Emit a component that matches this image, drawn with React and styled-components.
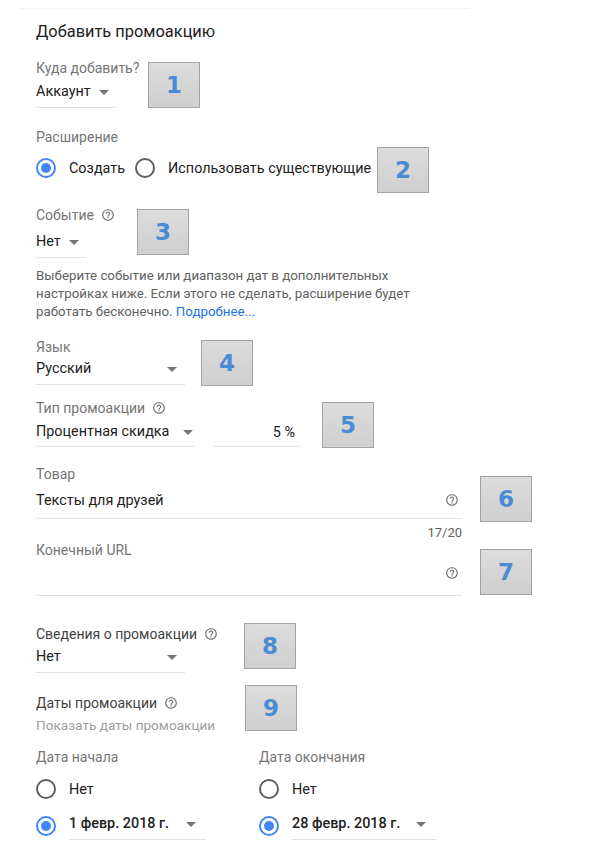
import React from "react";
import styled, { createGlobalStyle } from "styled-components";

const Global = createGlobalStyle`
  html, body { margin: 0; padding: 0; background: #fff; }
  body { font-family: Roboto, "Liberation Sans", Arial, sans-serif; color: #212121; }
  * { box-sizing: border-box; }
`;

const Page = styled.div`
  width: 600px;
  height: 862px;
  overflow: hidden;
  padding-top: 8px;
`;

const TopRule = styled.div`
  margin-left: 20px;
  width: 450px;
  height: 1px;
  background: #f2f2f2;
`;

const Content = styled.div`
  padding-left: 36px;
  display: flex;
  flex-direction: column;
`;

const Title = styled.h1`
  margin: 13px 0 0;
  font-size: 16.4px;
  line-height: 20px;
  font-weight: 400;
  color: #212121;
`;

const Section = styled.div`
  position: relative;
  margin-top: ${(p) => p.$mt}px;
  display: flex;
  flex-direction: column;
`;

const Label = styled.div`
  display: flex;
  align-items: center;
  gap: 7px;
  font-size: 14px;
  line-height: 16px;
  color: ${(p) => (p.$dark ? "#424242" : "#757575")};
  margin-bottom: ${(p) => p.$mb || 0}px;
`;

const Select = styled.div`
  width: ${(p) => p.$w}px;
  height: ${(p) => 24 + (p.$pb ?? 3) + 1}px;
  padding-bottom: ${(p) => p.$pb ?? 3}px;
  padding-right: ${(p) => p.$pr ?? 0}px;
  display: flex;
  align-items: center;
  justify-content: ${(p) => (p.$spread ? "space-between" : "flex-start")};
  gap: 8px;
  border-bottom: 1px solid #e0e0e0;
  font-size: 14.4px;
  line-height: 24px;
  color: #212121;
`;

const Value = styled.span`
  font-weight: ${(p) => (p.$bold ? 500 : 400)};
  white-space: nowrap;
`;

const Arrow = styled.span`
  width: 0;
  height: 0;
  border-left: 5px solid transparent;
  border-right: 5px solid transparent;
  border-top: 5px solid #757575;
  margin-top: 1px;
  flex: none;
`;

const Row = styled.div`
  display: flex;
  align-items: center;
  gap: ${(p) => p.$gap || 0}px;
`;

const RadioRow = styled.div`
  display: flex;
  align-items: center;
  height: 24px;
  gap: 13px;
  font-size: 14.4px;
  color: #212121;
  margin-top: ${(p) => p.$mt || 0}px;
  margin-right: ${(p) => p.$mr || 0}px;
`;

const Radio = styled.span`
  width: 20px;
  height: 20px;
  border-radius: 50%;
  flex: none;
  border: 2px solid ${(p) => (p.$on ? "#4285f4" : "#5f5f5f")};
  display: flex;
  align-items: center;
  justify-content: center;
  &::after {
    content: "";
    width: 10px;
    height: 10px;
    border-radius: 50%;
    background: ${(p) => (p.$on ? "#4285f4" : "transparent")};
  }
`;

const Help = styled.p`
  margin: 9px 0 0;
  font-size: 13.3px;
  line-height: 18px;
  color: #616161;
`;

const Link = styled.a`
  color: #1a73e8;
  text-decoration: none;
`;

const TextInput = styled.div`
  width: ${(p) => p.$w}px;
  height: ${(p) => 24 + p.$pb + 1}px;
  padding-bottom: ${(p) => p.$pb}px;
  padding-right: ${(p) => p.$pr || 0}px;
  display: flex;
  align-items: center;
  justify-content: ${(p) => (p.$right ? "flex-end" : "space-between")};
  border-bottom: 1px solid #e0e0e0;
  font-size: 14.4px;
  color: #212121;
`;

const Counter = styled.div`
  width: 426px;
  margin-top: 6px;
  text-align: right;
  font-size: 13px;
  line-height: 16px;
  color: #616161;
`;

const Sub = styled.div`
  margin-top: 6px;
  font-size: 13.6px;
  line-height: 16px;
  color: #9e9e9e;
`;

const Columns = styled.div`
  display: grid;
  grid-template-columns: 223px 1fr;
`;

const Column = styled.div`
  display: flex;
  flex-direction: column;
`;

const Marker = styled.div`
  position: absolute;
  left: ${(p) => p.$x}px;
  top: ${(p) => p.$y}px;
  width: 52px;
  height: 46px;
  border: 1px solid #a3a3a3;
  background: linear-gradient(180deg, #dcdcdc 0%, #cfcfcf 100%);
  display: flex;
  align-items: center;
  justify-content: center;
  font-family: "DejaVu Sans", Verdana, sans-serif;
  font-weight: 700;
  font-size: 23px;
  color: #4a8bd3;
`;

const HelpIcon = ({ size = 14 }) => (
  <svg width={size} height={size} viewBox="0 0 24 24" fill="#6f6f6f" style={{ flex: "none" }}>
    <path d="M11 18h2v-2h-2v2zm1-16C6.48 2 2 6.48 2 12s4.48 10 10 10 10-4.48 10-10S17.52 2 12 2zm0 18c-4.41 0-8-3.590-8-8s3.59-8 8-8 8 3.59 8 8-3.59 8-8 8zm0-14c-2.21 0-4 1.79-4 4h2c0-1.1.9-2 2-2s2 .9 2 2c0 2-3 1.75-3 5h2c0-2.25 3-2.5 3-5 0-2.21-1.790-4-4-4z" />
  </svg>
);

const DateColumn = ({ label, date, width }) => (
  <Column>
    <Label>{label}</Label>
    <RadioRow $mt={12}>
      <Radio />
      <span>Нет</span>
    </RadioRow>
    <RadioRow $mt={13}>
      <Radio $on />
      <Select $w={width} $pr={10} $spread $pb={3}>
        <Value $bold>{date}</Value>
        <Arrow />
      </Select>
    </RadioRow>
  </Column>
);

export default function App() {
  return (
    <Page>
      <Global />
      <TopRule />
      <Content>
        <Title>Добавить промоакцию</Title>

        <Section $mt={18}>
          <Label $mb={4}>Куда добавить?</Label>
          <Select $w={80} $pb={3}>
            <Value>Аккаунт</Value>
            <Arrow />
          </Select>
          <Marker $x={112} $y={2}>1</Marker>
        </Section>

        <Section $mt={21}>
          <Label $mb={11}>Расширение</Label>
          <Row>
            <RadioRow $mr={10}>
              <Radio $on />
              <span>Создать</span>
            </RadioRow>
            <RadioRow>
              <Radio />
              <span>Использовать существующие</span>
            </RadioRow>
          </Row>
          <Marker $x={341} $y={18}>2</Marker>
        </Section>

        <Section $mt={27}>
          <Label $mb={7}>
            Событие <HelpIcon />
          </Label>
          <Select $w={50} $pb={3}>
            <Value>Нет</Value>
            <Arrow />
          </Select>
          <Marker $x={101} $y={2}>3</Marker>
          <Help>
            Выберите событие или диапазон дат в дополнительных
            <br />
            настройках ниже. Если этого не сделать, расширение будет
            <br />
            работать бесконечно. <Link href="#">Подробнее...</Link>
          </Help>
        </Section>

        <Section $mt={18}>
          <Label $mb={2}>Язык</Label>
          <Select $w={149} $pr={8} $spread $pb={3}>
            <Value>Русский</Value>
            <Arrow />
          </Select>
          <Marker $x={165} $y={1}>4</Marker>
        </Section>

        <Section $mt={15}>
          <Label $mb={4}>
            Тип промоакции <HelpIcon />
          </Label>
          <Row $gap={18}>
            <Select $w={159} $pr={2} $spread $pb={2}>
              <Value>Процентная скидка</Value>
              <Arrow />
            </Select>
            <TextInput $w={87} $pb={2} $pr={5} $right>
              5 %
            </TextInput>
          </Row>
          <Marker $x={286} $y={2}>5</Marker>
        </Section>

        <Section $mt={19}>
          <Label $mb={6}>Товар</Label>
          <TextInput $w={426} $pb={6} $pr={3}>
            <span>Тексты для друзей</span>
            <HelpIcon />
          </TextInput>
          <Counter>17/20</Counter>
          <Marker $x={444} $y={10}>6</Marker>
        </Section>

        <Section $mt={1}>
          <Label $mb={3}>Конечный URL</Label>
          <TextInput $w={426} $pb={10} $pr={3}>
            <span />
            <HelpIcon />
          </TextInput>
          <Marker $x={444} $y={7}>7</Marker>
        </Section>

        <Section $mt={30}>
          <Label $mb={3} $dark>
            Сведения о промоакции <HelpIcon />
          </Label>
          <Select $w={149} $pr={8} $spread $pb={3}>
            <Value>Нет</Value>
            <Arrow />
          </Select>
          <Marker $x={208} $y={-3}>8</Marker>
        </Section>

        <Section $mt={22}>
          <Label $dark>
            Даты промоакции <HelpIcon />
          </Label>
          <Sub>Показать даты промоакции</Sub>
          <Marker $x={209} $y={-10}>9</Marker>
        </Section>

        <Section $mt={16}>
          <Columns>
            <DateColumn label="Дата начала" date="1 февр. 2018 г." width={137} />
            <DateColumn label="Дата окончания" date="28 февр. 2018 г." width={144} />
          </Columns>
        </Section>
      </Content>
    </Page>
  );
}
